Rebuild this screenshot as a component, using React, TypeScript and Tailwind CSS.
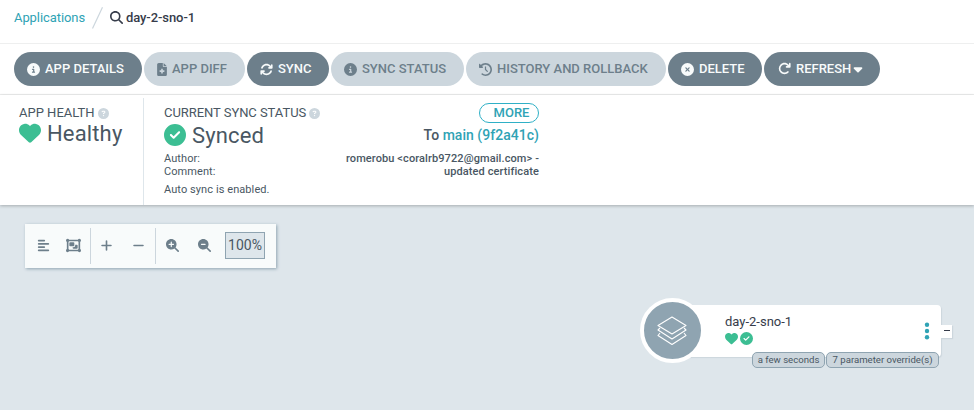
import type { ReactNode } from 'react';
import {
  FaAlignLeft,
  FaArrowRotateRight,
  FaArrowsRotate,
  FaCaretDown,
  FaCircleCheck,
  FaCircleInfo,
  FaCircleQuestion,
  FaCircleXmark,
  FaClockRotateLeft,
  FaFileMedical,
  FaHeart,
  FaMagnifyingGlass,
  FaMagnifyingGlassMinus,
  FaMagnifyingGlassPlus,
  FaMinus,
  FaObjectGroup,
  FaPlus,
} from 'react-icons/fa6';

function ActionButton({ icon, width, disabled, children }: { icon: ReactNode; width: string; disabled?: boolean; children: ReactNode }) {
  const tone = disabled ? 'bg-[#ccd6dd] text-[#6d7f8b]' : 'bg-[#6d7f8b] text-[#f8fbfb]';
  return (
    <button className={`flex h-[34px] shrink-0 items-center whitespace-nowrap rounded-full pl-[13px] text-[13px] font-medium ${tone} ${width}`}>
      {icon}
      <span className="ml-[5px]">{children}</span>
    </button>
  );
}

function Header() {
  return (
    <header className="flex h-[43px] items-start pl-[14px] text-[13px] leading-[18px]">
      <a className="mt-[9px] w-[71px] tracking-[-0.08px] text-[#2fa3b5]">Applications</a>
      <svg className="ml-[6px] mt-[6px]" width="14" height="24" viewBox="0 0 14 24">
        <path d="M1.5 22.5L11.5 1.2" stroke="#ccd6dd" strokeWidth="1.2" />
      </svg>
      <FaMagnifyingGlass className="ml-[5px] mt-[11px] text-[13px] text-[#363c4a]" />
      <span className="ml-[3px] mt-[9px] font-medium tracking-[-0.08px] text-[#363c4a]">day-2-sno-1</span>
    </header>
  );
}

function Toolbar() {
  return (
    <nav className="flex h-[52px] items-center gap-[2px] border-y border-[#eeefef] pl-[14px]">
      <ActionButton width="w-[128px]" icon={<FaCircleInfo />}>APP DETAILS</ActionButton>
      <ActionButton width="w-[101px]" disabled icon={<FaFileMedical className="w-[10px]" />}>APP DIFF</ActionButton>
      <ActionButton width="w-[82px]" icon={<FaArrowsRotate />}>SYNC</ActionButton>
      <ActionButton width="w-[133px]" disabled icon={<FaCircleInfo />}>SYNC STATUS</ActionButton>
      <ActionButton width="w-[200px]" disabled icon={<FaClockRotateLeft />}>HISTORY AND ROLLBACK</ActionButton>
      <ActionButton width="w-[94px]" icon={<FaCircleXmark />}>DELETE</ActionButton>
      <ActionButton width="w-[116px]" icon={<FaArrowRotateRight className="mb-px ml-px" />}>
        <span className="flex items-center">REFRESH<FaCaretDown className="text-[14px]" /></span>
      </ActionButton>
    </nav>
  );
}

function StatusPanel() {
  return (
    <section className="relative z-10 flex h-[110px] bg-white pt-[3px] text-[#495763] shadow-[0_1px_3px_rgba(0,0,0,0.25)]">
      <div className="w-[144px] border-r border-[#dee6eb] pl-[19px]">
        <div className="mt-[7px] flex h-[16px] items-center text-[13px]">
          APP HEALTH<FaCircleQuestion className="ml-[3px] text-[11px] text-[#ccd6dd]" />
        </div>
        <div className="flex h-[24px] items-center text-[22px] tracking-[0.15px]">
          <FaHeart className="text-[#3cbe93]" /><span className="ml-[6px]">Healthy</span>
        </div>
      </div>
      <div className="w-[170px] pl-[20px]">
        <div className="mt-[7px] flex h-[16px] items-center whitespace-nowrap text-[13px] tracking-[-0.05px]">
          CURRENT SYNC STATUS<FaCircleQuestion className="ml-[3px] shrink-0 text-[11px] text-[#ccd6dd]" />
        </div>
        <div className="flex h-[28px] items-center text-[22px] tracking-[0.15px]">
          <FaCircleCheck className="mb-px text-[#3cbe93]" /><span className="ml-[6px]">Synced</span>
        </div>
        <div className="mt-[3px] text-[11px] leading-[13px] tracking-[0.08px]">
          <p>Author:</p>
          <p>Comment:</p>
          <p className="mt-[5px]">Auto sync is enabled.</p>
        </div>
      </div>
      <div className="flex w-[225px] flex-col items-end font-medium">
        <button className="mt-[5px] h-[20px] w-[60px] rounded-full border border-[#2fb0c6] pl-[5px] text-[13px] leading-[18px] text-[#2fa3b5]">MORE</button>
        <div className="mt-[2px] text-[14px] leading-[20px] tracking-[0.03px]">To <span className="text-[#2fa3b5]">main (9f2a41c)</span></div>
        <div className="mt-[7px] whitespace-nowrap text-right text-[11px] leading-[13px] tracking-[0.1px]">
          romerobu &lt;coralrb9722@gmail.com&gt; -<br />updated certificate
        </div>
      </div>
    </section>
  );
}

function GraphToolbar() {
  return (
    <div className="ml-[25px] flex h-[44px] w-[251px] items-center bg-[#f8fbfb] text-[13px] text-[#6d7f8b] shadow-[1px_1px_3px_#8fa4b1]">
      <div className="flex h-[36px] w-[66px] items-center border-r border-[#ccd6dd] pb-[2px] pl-[12px]">
        <FaAlignLeft />
        <FaObjectGroup className="ml-[16px] text-[15px]" />
      </div>
      <div className="flex h-[36px] w-[65px] items-center border-r border-[#ccd6dd] pb-[2px] pl-[9px]">
        <FaPlus /><FaMinus className="ml-[19px]" />
      </div>
      <div className="flex items-center pb-[2px] pl-[10px]">
        <FaMagnifyingGlassPlus /><FaMagnifyingGlassMinus className="ml-[19px]" />
        <span className="ml-[14px] flex h-[27px] w-[40px] items-center justify-center border border-[#8fa4b1] bg-[#dee6eb] text-[14px] text-[#495763]">100%</span>
      </div>
    </div>
  );
}

function LayersIcon() {
  return (
    <svg className="mr-px" width="32" height="30" viewBox="0 0 32 30" fill="none" stroke="white" strokeWidth="1.1" strokeLinejoin="round">
      <path d="M16 1L30 9.5L16 18L2 9.5Z" />
      <path d="M4 12L2 14L16 23L30 14L28 12" />
      <path d="M4 17L2 19.5L16 28.5L30 19.5L28 17" />
    </svg>
  );
}

function KebabIcon() {
  return (
    <svg className="absolute left-[264px] top-[17px]" width="6" height="18" viewBox="0 0 6 18" fill="#2fa3b5">
      <circle cx="3" cy="2.7" r="2.2" />
      <circle cx="3" cy="9" r="2.2" />
      <circle cx="3" cy="15.3" r="2.2" />
    </svg>
  );
}

function ResourceNode() {
  return (
    <div className="absolute left-[660px] top-[100px] h-[52px] w-[281px] rounded-[4px] bg-white shadow-[1px_1px_1px_#ccd6dd]">
      <div className="absolute left-[-20px] top-[-7px] flex h-[65px] w-[65px] items-center justify-center rounded-full border-4 border-white bg-[#8fa4b1]">
        <LayersIcon />
      </div>
      <div className="pl-[65px] pt-[8px]">
        <div className="text-[13px] leading-[17px] text-[#363c4a]">day-2-sno-1</div>
        <div className="mt-[2px] flex gap-[2px] text-[13px] text-[#3cbe93]"><FaHeart /><FaCircleCheck /></div>
      </div>
      <KebabIcon />
      <div className="absolute right-[2px] top-[47px] flex gap-px whitespace-nowrap text-[9.6px] leading-[14px] text-[#495763]">
        <span className="flex h-[16px] w-[73px] justify-center rounded-[5px] border border-[#8fa4b1] bg-[#ccd6dd]">a few seconds</span>
        <span className="flex h-[16px] w-[113px] justify-center rounded-[5px] border border-[#8fa4b1] bg-[#ccd6dd]">7 parameter override(s)</span>
      </div>
      <div className="absolute left-[281px] top-[20px] flex h-[13px] w-[11px] items-start justify-center bg-white pt-[5px] shadow-[1px_1px_1px_#ccd6dd]">
        <span className="h-px w-[6px] bg-[#363c4a]" />
      </div>
    </div>
  );
}

export default function App() {
  return (
    <div className="h-[410px] w-[974px] overflow-hidden bg-white font-[Roboto,sans-serif]">
      <Header />
      <Toolbar />
      <div className="flex h-[315px] flex-col">
        <StatusPanel />
        <main className="relative h-[205px] bg-[#dee6eb] pt-[19px]">
          <GraphToolbar />
          <ResourceNode />
        </main>
      </div>
    </div>
  );
}
